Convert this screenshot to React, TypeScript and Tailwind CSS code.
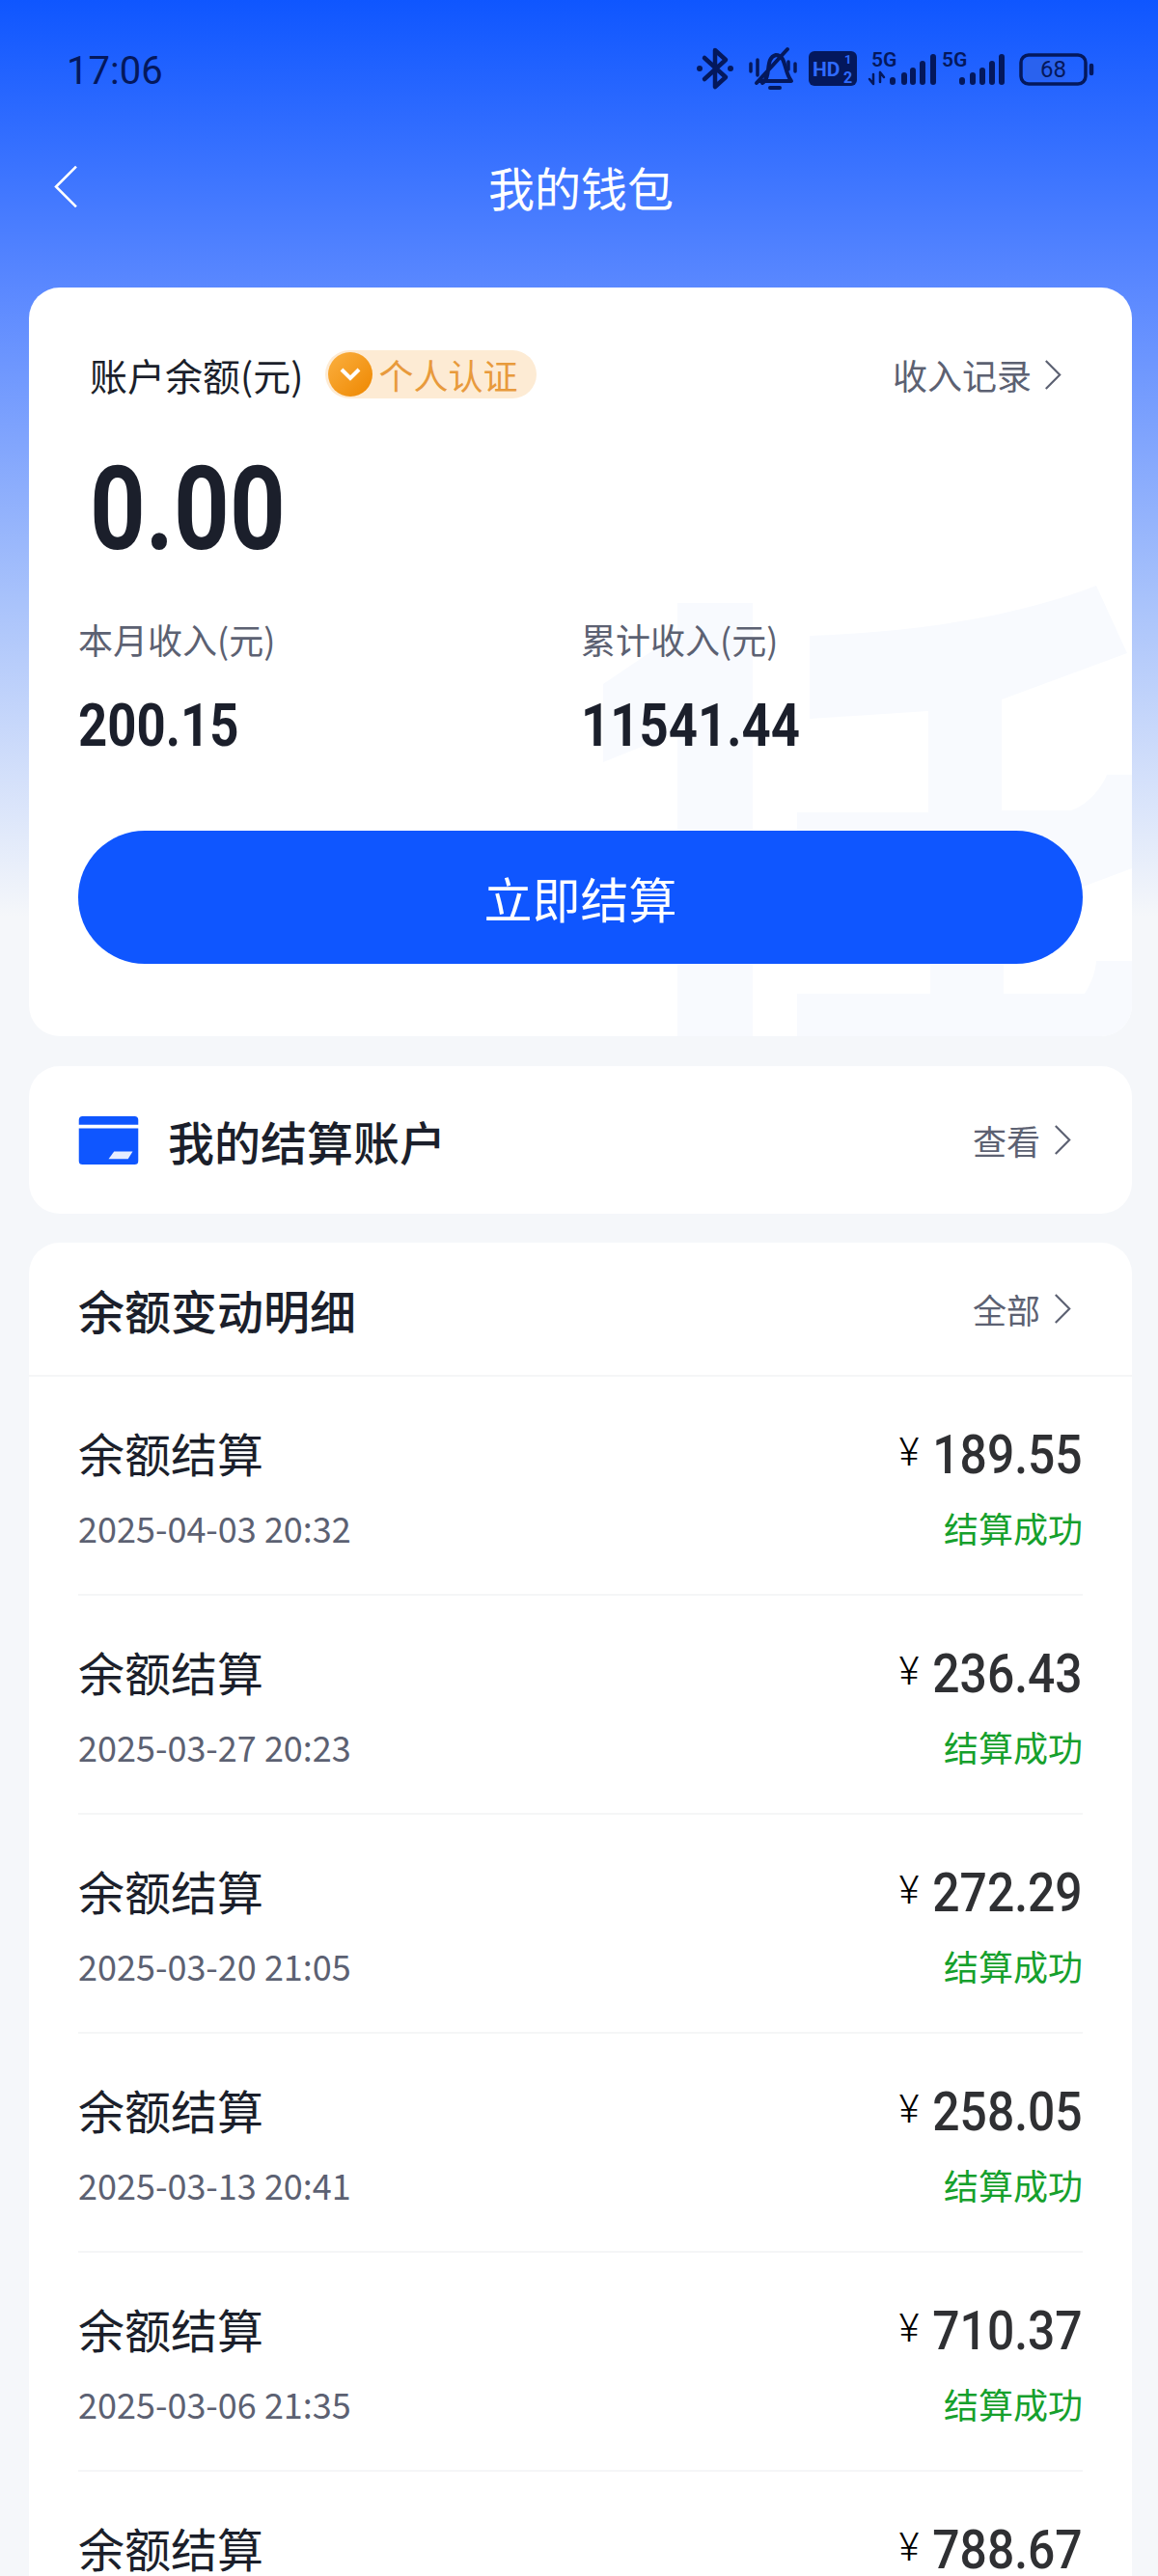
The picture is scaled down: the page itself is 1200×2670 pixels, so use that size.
import React from "react";

const rows = [
  ["2025-04-03 20:32", "189.55"],
  ["2025-03-27 20:23", "236.43"],
  ["2025-03-20 21:05", "272.29"],
  ["2025-03-13 20:41", "258.05"],
  ["2025-03-06 21:35", "710.37"],
  ["2025-02-27 20:18", "788.67"],
];

const CJK = { fontFamily: '"Noto Sans CJK SC","Noto Sans",sans-serif' };
const NUM = { fontFamily: 'Roboto,"Liberation Sans",sans-serif' };

function Chevron({ className, left, width = 2.4 }: { className?: string; left?: boolean; width?: number }) {
  return (
    <svg viewBox="0 0 20 36" className={className} fill="none" stroke="currentColor" strokeWidth={width}>
      <path d={left ? "M18 2 L2 18 L18 34" : "M2 2 L18 18 L2 34"} />
    </svg>
  );
}

function StatusBar() {
  const ink = "#04185c";
  return (
    <div className="mt-[46px] flex h-[50px] items-center justify-between pl-[69px] pr-[64px]">
      <span className="pt-[5px] text-[40px] leading-none text-[#04185c]" style={NUM}>17:06</span>
      <svg width="416" height="50" viewBox="0 0 416 50" fill="none" stroke={ink} strokeLinecap="round" strokeLinejoin="round">
        <path d="M10 14 L32 34 L21 44 V6 L32 16 L10 36" strokeWidth="4.5" />
        <circle cx="5" cy="25" r="3" fill={ink} stroke="none" />
        <circle cx="37" cy="25" r="3" fill={ink} stroke="none" />
        <path d="M70 40 C80 34 72 14 84 11 C95 11 92 28 100 38 H66 M64 40 L96 5 M78 45 H88" strokeWidth="4" />
        <path d="M58 20 V28 M65 16 V32 M104 20 V28 M97 18 V26" strokeWidth="3.5" />
        <rect x="118" y="7" width="50" height="36" rx="6" fill={ink} stroke="none" />
        <text x="122" y="33" fontSize="21" fontWeight="700" fill="#2f6bff" stroke="none" fontFamily="Roboto">HD</text>
        <text x="155" y="20" fontSize="13" fontWeight="700" fill="#2f6bff" stroke="none" fontFamily="Roboto">1</text>
        <text x="154" y="40" fontSize="16" fontWeight="700" fill="#2f6bff" stroke="none" fontFamily="Roboto">2</text>
        <text x="183" y="23" fontSize="21" fontWeight="600" fill={ink} stroke="none" fontFamily="Roboto">5G</text>
        <path d="M185 31 V41 M181 36 L185 41 M192 29 V39 M196 34 L192 29" strokeWidth="2.5" />
        <path d="M205 37 V39 M217 32 V39 M226 27 V39 M236 20 V39 M247 13 V39" strokeWidth="6" />
        <text x="256" y="23" fontSize="21" fontWeight="600" fill={ink} stroke="none" fontFamily="Roboto">5G</text>
        <path d="M277 37 V39 M288 32 V39 M298 27 V39 M308 20 V39 M318 13 V39" strokeWidth="6" />
        <rect x="338" y="11" width="67" height="30" rx="8" strokeWidth="3.5" />
        <rect x="342" y="15" width="42" height="22" rx="4" fill="#2a62ee" stroke="none" />
        <text x="358" y="34" fontSize="24" fill={ink} stroke="none" fontFamily="Roboto">68</text>
        <path d="M411 22 V30" strokeWidth="4.5" />
      </svg>
    </div>
  );
}

function Watermark() {
  return (
    <svg className="absolute inset-0" width="1143" height="776" viewBox="30 298 1143 776" fill="#f8fafe">
      <path d="M702 625 H780 V1074 H702 V759 L625 790 V709 L702 657 Z" />
      <path d="M839 659 C950 655 1050 640 1136 607 L1168 677 L1038 725 V840 H1110 C1125 835 1140 820 1147 803 H1173 V900 L1040 950 H826 V842 H962 V737 L839 745 Z" />
      <path d="M826 1030 H964 V990 H1040 V1030 H1124 C1130 1020 1135 1010 1136 996 H1173 V1074 H826 Z" />
    </svg>
  );
}

function Row({ date, amount, last }: { date: string; amount: string; last?: boolean }) {
  return (
    <div className={`mx-[51px] flex h-[227px] justify-between pt-[45px] ${last ? "" : "border-b-2 border-[#f5f6f7]"}`}>
      <div>
        <div className="text-[48px] leading-[66px] text-[#1b1f2b]" style={CJK}>余额结算</div>
        <div className="mt-[20px] text-[36px] leading-[50px] text-[#5c6172]" style={CJK}>{date}</div>
      </div>
      <div className="flex flex-col items-end pt-[3px]">
        <div className="flex h-[66px] items-center" style={NUM}>
          <span className="-mr-[2px] -mt-[4px] text-[40px] font-light leading-none text-black">¥</span>
          <span className="inline-block origin-right scale-x-[0.905] text-[55px] font-medium leading-none text-[#2f3033]">{amount}</span>
        </div>
        <div className="mt-[17px] text-[36px] leading-[50px] text-[#16a02c]" style={CJK}>结算成功</div>
      </div>
    </div>
  );
}

export default function App() {
  return (
    <div className="flex h-[2670px] w-[1200px] flex-col overflow-hidden bg-[linear-gradient(180deg,#0f56ff_0px,#5a88ff_298px,#a8c2fb_620px,#f5f7fa_950px)]" style={CJK}>
      <StatusBar />
      <div className="relative mt-[50px] flex h-[96px] shrink-0 items-center justify-center pb-[2px] pl-[4px]">
        <Chevron left width={2} className="absolute left-[55px] top-[24px] h-[47px] w-[27px] text-white" />
        <span className="text-[48px] leading-none text-white">我的钱包</span>
      </div>
      <div className="mt-[56px] pl-[30px] pr-[27px]">
        <div className="relative h-[776px] overflow-hidden rounded-[32px] bg-white">
          <Watermark />
          <div className="relative pt-[64px]">
            <div className="flex h-[52px] items-center justify-between pl-[63px] pr-[73px]">
              <div className="flex items-center">
                <span className="text-[39px] leading-[52px] text-[#1b1f2b]">账户余额(元)</span>
                <span className="ml-[23px] flex h-[50px] items-center rounded-full bg-[#fdebd4] pl-[3px] pr-[20px]">
                  <span className="flex h-[46px] w-[46px] items-center justify-center rounded-full bg-[linear-gradient(135deg,#fbb040,#ee8700)]">
                    <svg width="24" height="16" viewBox="0 0 24 16" fill="none" stroke="#fff" strokeWidth="4"><path d="M3 3 L12 12 L21 3" /></svg>
                  </span>
                  <span className="ml-[6px] text-[36px] leading-none text-[#e89a3c]">个人认证</span>
                </span>
              </div>
              <div className="flex items-center text-[#5c6172]">
                <span className="text-[36px] leading-[52px]">收入记录</span>
                <Chevron className="ml-[13px] h-[33px] w-[18px]" />
              </div>
            </div>
            <div className="ml-[63px] mt-[54px] origin-left scale-x-[0.84] text-[120px] font-bold leading-[120px] text-[#1b1f2b]" style={NUM}>0.00</div>
            <div className="mt-[48px] flex px-[51px]">
              <div className="w-[521px]">
                <div className="text-[36px] leading-[52px] text-[#5c6172]">本月收入(元)</div>
                <div className="mt-[31px] origin-left scale-x-[0.85] text-[62px] font-bold leading-[66px] text-[#1b1f2b]" style={NUM}>200.15</div>
              </div>
              <div>
                <div className="text-[36px] leading-[52px] text-[#5c6172]">累计收入(元)</div>
                <div className="mt-[31px] origin-left scale-x-[0.85] text-[62px] font-bold leading-[66px] text-[#1b1f2b]" style={NUM}>11541.44</div>
              </div>
            </div>
            <div className="mx-[51px] mt-[76px] flex h-[138px] items-center justify-center rounded-full bg-[#0f56ff] text-[50px] leading-none text-white">立即结算</div>
          </div>
        </div>
        <div className="mt-[31px] flex h-[153px] items-center justify-between rounded-[32px] bg-white pl-[51px] pr-[63px]">
          <div className="flex items-center">
            <svg width="63" height="50" viewBox="0 0 64 52">
              <path d="M4 0 H60 A4 4 0 0 1 64 4 V9 H0 V4 A4 4 0 0 1 4 0 Z M0 13 H64 V48 A4 4 0 0 1 60 52 H4 A4 4 0 0 1 0 48 Z" fill="#0f56ff" />
              <path d="M32 46 L38 38 H58 L53 46 Z" fill="#fff" opacity="0.9" />
            </svg>
            <span className="ml-[30px] text-[48px] font-medium leading-none text-[#1b1f2b]">我的结算账户</span>
          </div>
          <div className="flex items-center text-[#5c6172]">
            <span className="text-[35px] leading-none">查看</span>
            <Chevron className="ml-[14px] h-[33px] w-[18px]" />
          </div>
        </div>
        <div className="mt-[30px] rounded-[32px] bg-white">
          <div className="flex h-[139px] items-center justify-between border-b-2 border-[#f5f6f7] pl-[51px] pr-[63px]">
            <span className="text-[48px] font-medium leading-none text-[#1b1f2b]">余额变动明细</span>
            <div className="flex items-center text-[#5c6172]">
              <span className="text-[35px] leading-none">全部</span>
              <Chevron className="ml-[14px] h-[33px] w-[18px]" />
            </div>
          </div>
          {rows.map((r, i) => (
            <Row key={r[0]} date={r[0]} amount={r[1]} last={i === rows.length - 1} />
          ))}
        </div>
      </div>
    </div>
  );
}
